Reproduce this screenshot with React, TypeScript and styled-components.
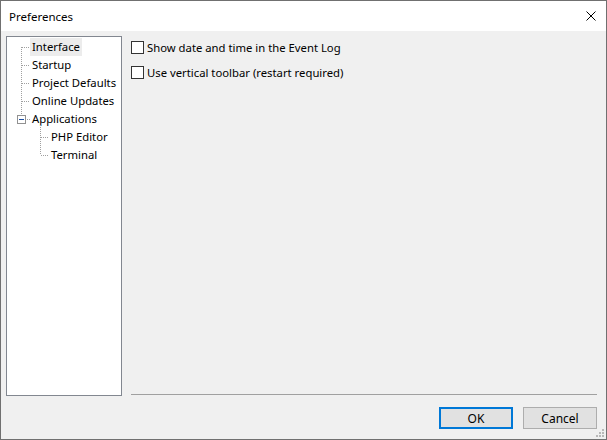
import React from "react";
import styled, { createGlobalStyle } from "styled-components";

const Global = createGlobalStyle`
  html, body { margin: 0; padding: 0; background: #ffffff; }
  body { font-family: "Noto Sans", "Liberation Sans", sans-serif; font-size: 11.3px; color: #000; }
  * { box-sizing: border-box; }
`;

const Window = styled.div`
  width: 607px;
  height: 440px;
  border: 1px solid #707070;
  display: flex;
  flex-direction: column;
  background: #f0f0f0;
`;

const TitleBar = styled.div`
  height: 30px;
  background: #ffffff;
  display: flex;
  align-items: center;
  justify-content: space-between;
  padding: 0 10px 0 8px;
  font-size: 11.5px;
`;

const CloseButton = styled.div`
  width: 10px;
  height: 10px;
  display: flex;
`;

const Body = styled.div`
  flex: 1;
  display: flex;
  flex-direction: column;
  padding: 5px 9px 0 5px;
`;

const Main = styled.div`
  flex: 1;
  display: flex;
  gap: 9px;
`;

const TreePanel = styled.div`
  position: relative;
  width: 116px;
  height: 360px;
  background: #ffffff;
  border: 1px solid #828790;
  padding-top: 1px;
`;

const TreeLines = styled.svg`
  position: absolute;
  left: 0;
  top: 0;
`;

const TreeRow = styled.div<{ $level: number }>`
  height: 18px;
  display: flex;
  align-items: center;
  padding-left: ${(p) => (p.$level === 0 ? 23 : 42)}px;
`;

const TreeLabel = styled.span<{ $selected?: boolean }>`
  padding: 0 2px;
  height: 18px;
  line-height: 18px;
  background: ${(p) => (p.$selected ? "#ececec" : "transparent")};
  white-space: nowrap;
`;

const Content = styled.div`
  flex: 1;
  display: flex;
  flex-direction: column;
`;

const Options = styled.div`
  flex: 1;
  display: flex;
  flex-direction: column;
  gap: 12px;
  padding-top: 5px;
`;

const CheckRow = styled.label`
  display: flex;
  align-items: center;
  gap: 3px;
  height: 13px;
  white-space: nowrap;
`;

const Box = styled.span`
  width: 13px;
  height: 13px;
  border: 1px solid #333333;
  background: #ffffff;
  flex: none;
`;

const Separator = styled.div`
  height: 1px;
  background: #a0a0a0;
  margin-bottom: 1px;
`;

const Footer = styled.div`
  height: 43px;
  display: flex;
  justify-content: flex-end;
  align-items: flex-start;
  gap: 10px;
  padding-top: 11px;
  position: relative;
  font-size: 12px;
`;

const Button = styled.div<{ $default?: boolean }>`
  width: 74px;
  height: 22px;
  display: flex;
  align-items: center;
  justify-content: center;
  background: #e1e1e1;
  border: ${(p) => (p.$default ? "2px solid #0078d7" : "1px solid #adadad")};
`;

const Grip = styled.svg`
  position: absolute;
  right: -8px;
  bottom: 1px;
`;

export default function App() {
  const items: { label: string; level: number; selected?: boolean }[] = [
    { label: "Interface", level: 0, selected: true },
    { label: "Startup", level: 0 },
    { label: "Project Defaults", level: 0 },
    { label: "Online Updates", level: 0 },
    { label: "Applications", level: 0 },
    { label: "PHP Editor", level: 1 },
    { label: "Terminal", level: 1 },
  ];
  const dots = "#a0a0a0";
  return (
    <>
      <Global />
      <Window>
        <TitleBar>
          <span>Preferences</span>
          <CloseButton>
            <svg width="10" height="10" viewBox="0 0 10 10">
              <path d="M0.5 0.5 L9.5 9.5 M9.5 0.5 L0.5 9.5" stroke="#000" strokeWidth="1" />
            </svg>
          </CloseButton>
        </TitleBar>
        <Body>
          <Main>
            <TreePanel>
              <TreeLines width="114" height="358">
                <g stroke={dots} strokeWidth="1" strokeDasharray="1 1" shapeRendering="crispEdges">
                  <line x1="14.5" y1="10" x2="14.5" y2="82" />
                  <line x1="15" y1="10.5" x2="23" y2="10.5" />
                  <line x1="15" y1="28.5" x2="23" y2="28.5" />
                  <line x1="15" y1="46.5" x2="23" y2="46.5" />
                  <line x1="15" y1="64.5" x2="23" y2="64.5" />
                  <line x1="20" y1="82.5" x2="23" y2="82.5" />
                  <line x1="33.5" y1="88" x2="33.5" y2="118" />
                  <line x1="34" y1="100.5" x2="42" y2="100.5" />
                  <line x1="34" y1="118.5" x2="42" y2="118.5" />
                </g>
                <rect x="10.5" y="78.5" width="8" height="8" fill="#fff" stroke="#919191" shapeRendering="crispEdges" />
                <line x1="12" y1="82.5" x2="17" y2="82.5" stroke="#1d4fa3" shapeRendering="crispEdges" />
              </TreeLines>
              {items.map((it) => (
                <TreeRow key={it.label} $level={it.level}>
                  <TreeLabel $selected={it.selected}>{it.label}</TreeLabel>
                </TreeRow>
              ))}
            </TreePanel>
            <Content>
              <Options>
                <CheckRow>
                  <Box />
                  <span>Show date and time in the Event Log</span>
                </CheckRow>
                <CheckRow>
                  <Box />
                  <span>Use vertical toolbar (restart required)</span>
                </CheckRow>
              </Options>
              <Separator />
            </Content>
          </Main>
          <Footer>
            <Button $default>OK</Button>
            <Button>Cancel</Button>
            <Grip width="10" height="10" viewBox="0 0 10 10">
              <g fill="#b8b8b8">
                <rect x="7" y="1" width="2" height="2" />
                <rect x="4" y="4" width="2" height="2" />
                <rect x="7" y="4" width="2" height="2" />
                <rect x="1" y="7" width="2" height="2" />
                <rect x="4" y="7" width="2" height="2" />
                <rect x="7" y="7" width="2" height="2" />
              </g>
            </Grip>
          </Footer>
        </Body>
      </Window>
    </>
  );
}
